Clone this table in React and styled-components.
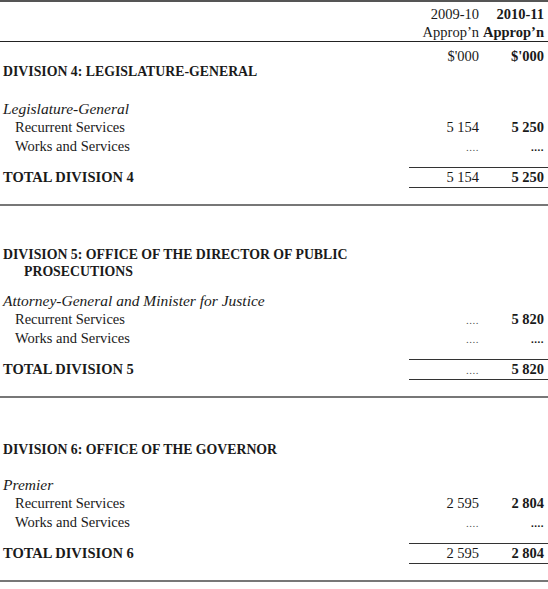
import React from 'react';
import styled, { createGlobalStyle } from 'styled-components';

const GlobalStyle = createGlobalStyle`
  html, body {
    margin: 0;
    padding: 0;
    background: #fff;
  }
  body {
    font-family: "Liberation Serif", "DejaVu Serif", serif;
    color: #1a1a1a;
  }
`;

const Page = styled.div`
  width: 548px;
  display: flex;
  flex-direction: column;
`;

const Rule = styled.div`
  height: ${(p) => p.$weight || 1}px;
  background: ${(p) => p.$color || '#333'};
  margin-top: ${(p) => p.$top || 0}px;
`;

const Row = styled.div`
  display: grid;
  grid-template-columns: 1fr 70px 69px;
  align-items: center;
  height: ${(p) => p.$h || 19}px;
  margin-top: ${(p) => p.$top || 0}px;
  padding-left: ${(p) => p.$indent || 3}px;
  font-size: 14.5px;
`;

const Label = styled.div`
  font-style: ${(p) => (p.$italic ? 'italic' : 'normal')};
  font-size: ${(p) => (p.$italic ? '15.5px' : 'inherit')};
  white-space: nowrap;
`;

const Amount = styled.div`
  text-align: right;
  font-weight: ${(p) => (p.$bold ? 700 : 400)};
  padding-right: ${(p) => (p.$last ? 4 : 0)}px;
  white-space: nowrap;
`;

const Dots = styled.span`
  font-size: 11px;
  letter-spacing: 0.5px;
  color: ${(p) => (p.$bold ? '#111' : '#555')};
  font-weight: ${(p) => (p.$bold ? 700 : 400)};
`;

const Title = styled.div`
  font-weight: 700;
  font-size: 13.8px;
  line-height: 17px;
  padding-left: 3px;
  margin-top: ${(p) => p.$top || 0}px;
  white-space: nowrap;
  .cont {
    display: block;
    padding-left: 21px;
  }
`;

const TotalWrap = styled.div`
  display: grid;
  grid-template-columns: 1fr 139px;
  margin-top: ${(p) => p.$top || 0}px;
  padding-left: 3px;
  font-size: 14.5px;
`;

const TotalLabel = styled.div`
  font-weight: 700;
  display: flex;
  align-items: center;
`;

const TotalAmounts = styled.div`
  display: grid;
  grid-template-columns: 70px 69px;
  align-items: center;
  height: 19px;
  border-top: 1px solid #333;
  border-bottom: 1px solid #333;
`;

const Val = ({ v, bold, last }) => (
  <Amount $bold={bold} $last={last}>
    {v === '....' ? <Dots $bold={bold}>....</Dots> : v}
  </Amount>
);

const divisions = [
  {
    title: ['DIVISION 4: LEGISLATURE-GENERAL'],
    titleTop: 0,
    subTop: 19,
    sub: 'Legislature-General',
    rows: [
      ['Recurrent Services', '5 154', '5 250'],
      ['Works and Services', '....', '....'],
    ],
    total: ['TOTAL DIVISION 4', '5 154', '5 250'],
  },
  {
    title: ['DIVISION 5: OFFICE OF THE DIRECTOR OF PUBLIC', 'PROSECUTIONS'],
    titleTop: 40,
    subTop: 11,
    sub: 'Attorney-General and Minister for Justice',
    rows: [
      ['Recurrent Services', '....', '5 820'],
      ['Works and Services', '....', '....'],
    ],
    total: ['TOTAL DIVISION 5', '....', '5 820'],
  },
  {
    title: ['DIVISION 6: OFFICE OF THE GOVERNOR'],
    titleTop: 43,
    subTop: 17,
    sub: 'Premier',
    rows: [
      ['Recurrent Services', '2 595', '2 804'],
      ['Works and Services', '....', '....'],
    ],
    total: ['TOTAL DIVISION 6', '2 595', '2 804'],
  },
];

function Division({ d }) {
  return (
    <>
      <Title $top={d.titleTop}>
        {d.title[0]}
        {d.title[1] && <span className='cont'>{d.title[1]}</span>}
      </Title>
      <Row $top={d.subTop}>
        <Label $italic>{d.sub}</Label>
      </Row>
      {d.rows.map((r, idx) => (
        <Row key={idx} $indent={15}>
          <Label>{r[0]}</Label>
          <Val v={r[1]} />
          <Val v={r[2]} bold last />
        </Row>
      ))}
      <TotalWrap $top={11}>
        <TotalLabel>{d.total[0]}</TotalLabel>
        <TotalAmounts>
          <Val v={d.total[1]} />
          <Val v={d.total[2]} bold last />
        </TotalAmounts>
      </TotalWrap>
      <Rule $top={16} $weight={2} $color='#777' />
    </>
  );
}

export default function App() {
  return (
    <Page>
      <GlobalStyle />
      <Rule $weight={2} $color='#555' />
      <Row $top={3} $h={18}>
        <span />
        <Amount>2009-10</Amount>
        <Amount $bold $last>2010-11</Amount>
      </Row>
      <Row $h={18}>
        <span />
        <Amount>Approp’n</Amount>
        <Amount $bold $last>Approp’n</Amount>
      </Row>
      <Rule $weight={1} $color='#222' />
      <Row $top={6} $h={15}>
        <span />
        <Amount>$'000</Amount>
        <Amount $bold $last>$'000</Amount>
      </Row>
      {divisions.map((d, idx) => (
        <Division key={idx} d={d} />
      ))}
    </Page>
  );
}
